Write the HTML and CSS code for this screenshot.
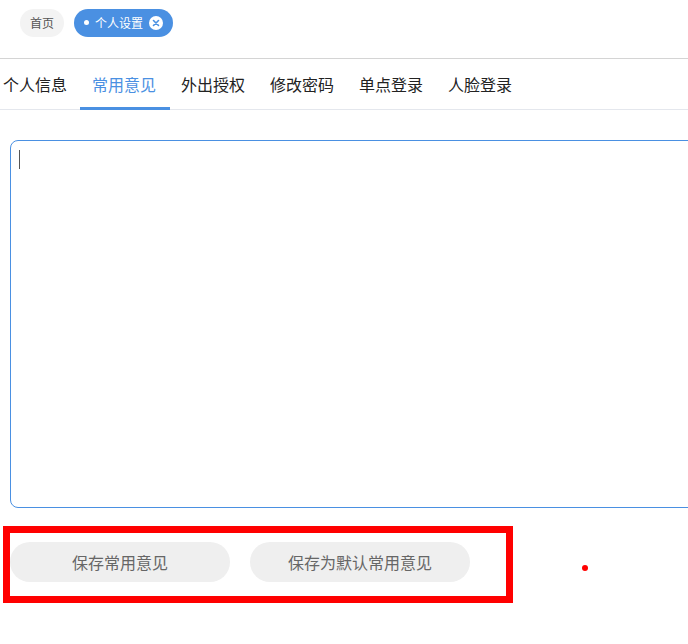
FILE: index.html
```html
<!DOCTYPE html>
<html lang="zh">
<head>
<meta charset="utf-8">
<link rel="stylesheet" href="styles.css">
</head>
<body>
<div class="tags">
  <span class="tag">首页</span>
  <span class="tag tag-active"><span class="dot"></span>个人设置<svg class="close" width="14" height="14" viewBox="0 0 14 14"><circle cx="7" cy="7" r="7" fill="#fff"/><path d="M4.5 4.5L9.5 9.5M9.5 4.5L4.5 9.5" stroke="#4a90e2" stroke-width="1.6" stroke-linecap="round"/></svg></span>
</div>
<div class="tabs">
  <div class="tab first">个人信息</div>
  <div class="tab active">常用意见</div>
  <div class="tab">外出授权</div>
  <div class="tab">修改密码</div>
  <div class="tab">单点登录</div>
  <div class="tab">人脸登录</div>
</div>
<div class="content">
  <div class="editor"><span class="caret"></span></div>
  <div class="actions">
    <button class="btn">保存常用意见</button>
    <button class="btn">保存为默认常用意见</button>
  </div>
  <div class="highlight"></div>
  <div class="red-dot"></div>
</div>
</body>
</html>
```
FILE: styles.css
```css
html {
  overflow: hidden;
}
html, body {
  margin: 0;
  padding: 0;
  background: #fff;
  font-family: "Microsoft YaHei", "Noto Sans CJK SC", "Noto Sans", sans-serif;
}
.tags {
  height: 59px;
  box-sizing: border-box;
  padding: 9px 0 0 20px;
  display: flex;
  gap: 10px;
  align-items: flex-start;
  border-bottom: 1px solid #d4d4d4;
}
.tag {
  height: 28px;
  line-height: 28px;
  border-radius: 14px;
  background: #f3f3f3;
  color: #555;
  font-size: 12px;
  padding: 0 10px;
  display: inline-flex;
  align-items: center;
}
.tag-active {
  background: #4a90e2;
  color: #fff;
  padding: 0 10px 0 10px;
}
.dot {
  width: 5px;
  height: 5px;
  border-radius: 50%;
  background: #fff;
  margin-right: 6px;
  margin-top: -1px;
}
.close {
  margin-left: 6px;
}
.tabs {
  height: 50px;
  display: flex;
  border-bottom: 1px solid #e4e7ed;
}
.tab {
  width: 89px;
  text-align: center;
  font-size: 16px;
  line-height: 50px;
  color: #222;
  box-sizing: border-box;
  position: relative;
}
.tab.first {
  width: 79.5px;
  text-align: left;
  padding-left: 3px;
}
.tab.active {
  color: #4a90e2;
}
.tab.active::after {
  content: "";
  position: absolute;
  left: 0;
  right: -1px;
  bottom: -1px;
  height: 3px;
  background: #4a90e2;
}
.content {
  position: relative;
  padding: 30px 0 40px 10px;
}
.editor {
  width: 720px;
  height: 368px;
  box-sizing: border-box;
  border: 1px solid #4a90e2;
  border-radius: 8px;
  padding: 9px 8px;
}
.caret {
  display: block;
  width: 1px;
  height: 19px;
  background: #555;
}
.actions {
  display: flex;
  gap: 20px;
  margin-top: 34px;
}
.btn {
  width: 220px;
  height: 40px;
  border: none;
  border-radius: 20px;
  background: #efefef;
  color: #666;
  font-family: inherit;
  font-size: 16px;
  padding: 0;
}
.highlight {
  position: absolute;
  left: 3px;
  top: 416px;
  width: 510px;
  height: 77px;
  box-sizing: border-box;
  border: 7px solid #ff0000;
}
.red-dot {
  position: absolute;
  left: 582px;
  top: 455px;
  width: 6px;
  height: 6px;
  border-radius: 50%;
  background: #f00;
}
```
